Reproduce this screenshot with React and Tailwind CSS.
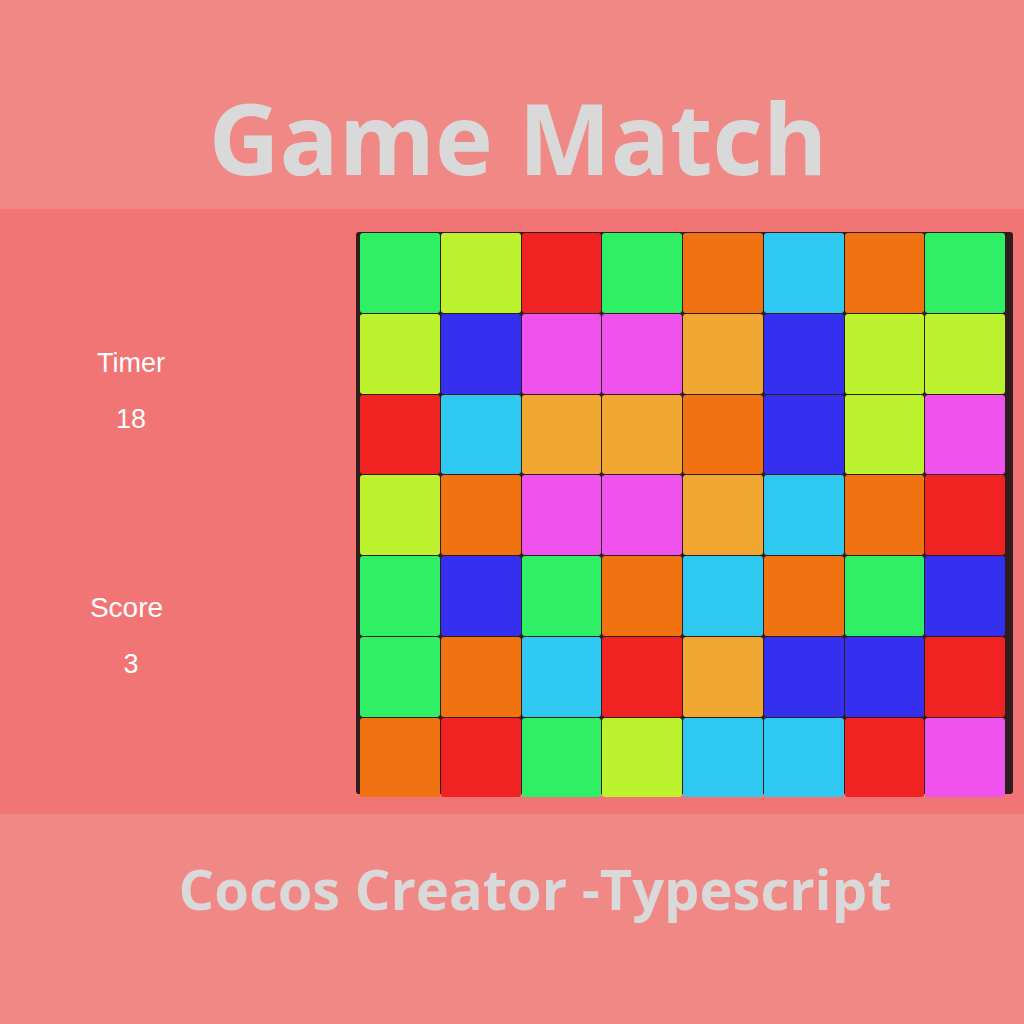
import React from "react";

const C = {
  G: "#2ff064",
  L: "#bdf22e",
  R: "#f02222",
  O: "#f07210",
  C: "#2ec8f0",
  B: "#352ff0",
  P: "#f052ee",
  Y: "#f0a832",
};

const rows = [
  "GLRGOCOG",
  "LBPPYBLL",
  "RCYYOBLP",
  "LOPPYCOR",
  "GBGOCOGB",
  "GOCRYBBR",
  "ORGLCCRP",
];

export default function App() {
  return (
    <div className="w-[1024px] h-[1024px] flex flex-col overflow-hidden">
      <div className="h-[209px] bg-[#f08886] flex justify-center pt-[88px] pl-[12px]">
        <span className="text-[98px] leading-[98px] font-bold text-[#d9d9d9] font-['Open_Sans',sans-serif]">
          Game Match
        </span>
      </div>
      <div className="h-[605px] bg-[#f27576] flex">
        <div className="w-[356px] flex flex-col items-start font-['Liberation_Sans',Arial,sans-serif] text-white">
          <div className="w-[262px] flex flex-col items-center pt-[139px]">
            <span className="text-[27px] leading-[30px]">Timer</span>
            <span className="text-[27px] leading-[30px] mt-[26px]">18</span>
          </div>
          <div className="w-[262px] flex flex-col items-center pt-[159px]">
            <span className="text-[28px] leading-[30px] pr-[9px]">Score</span>
            <span className="text-[27px] leading-[30px] mt-[26px]">3</span>
          </div>
        </div>
        <div className="mt-[23px] w-[657px] h-[562px] bg-[#2f1c1c] rounded-[3px] pl-[4px] pt-[1px]">
          <div className="grid grid-cols-[repeat(8,79.75px)] grid-rows-[repeat(7,79.75px)] gap-[1px]">
            {rows.flatMap((r, i) =>
              r.split("").map((k, j) => (
                <div
                  key={i + "-" + j}
                  className="rounded-[3px]"
                  style={{ backgroundColor: C[k] }}
                />
              ))
            )}
          </div>
        </div>
      </div>
      <div className="h-[210px] bg-[#f08886] flex justify-center pt-[46px] pl-[46px]">
        <span className="text-[56px] leading-[56px] font-bold text-[#d9d9d9] font-['Open_Sans',sans-serif]">
          Cocos Creator -Typescript
        </span>
      </div>
    </div>
  );
}
